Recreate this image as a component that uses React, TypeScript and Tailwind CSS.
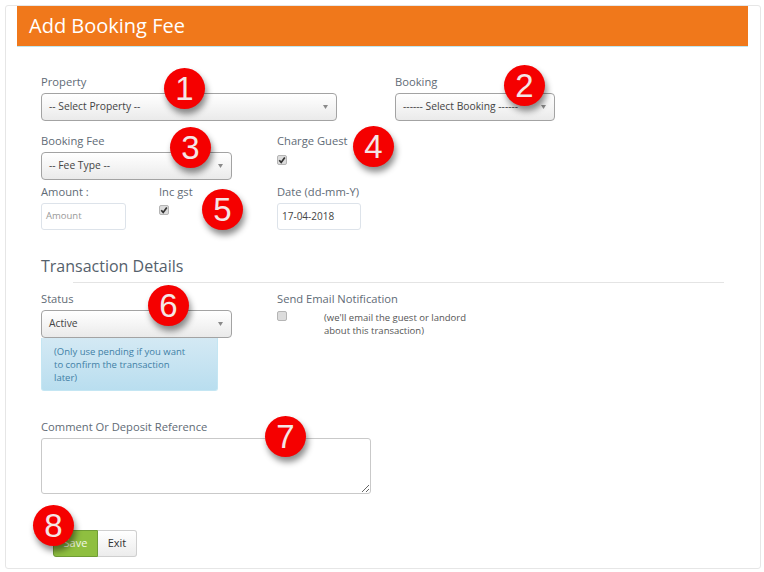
const font = { fontFamily: '"Open Sans", sans-serif' };

function Badge({ n, className }: { n: number; className: string }) {
  return (
    <div
      className={`absolute z-10 flex h-[41px] w-[41px] items-center justify-center rounded-full bg-[#f50000] text-[33px] leading-none text-[#f4e6e6] shadow-[2px_5px_6px_rgba(0,0,0,0.45)] ${className}`}
      style={{ fontFamily: '"Liberation Sans", sans-serif' }}
    >
      {n}
    </div>
  );
}

function Label({ children, className = "" }: { children: React.ReactNode; className?: string }) {
  return <div className={`text-[11.2px] leading-[16px] text-[#5f6b76] ${className}`}>{children}</div>;
}

function FakeSelect({ text, className }: { text: string; className: string }) {
  return (
    <div
      className={`flex h-[28px] items-center justify-between rounded-[4px] border border-[#a3a3a3] bg-gradient-to-b from-white via-[#f5f5f5] to-[#eaeaea] pl-[7px] pr-[8px] text-[10.3px] text-[#444] ${className}`}
    >
      <span>{text}</span>
      <svg width="5" height="4" viewBox="0 0 5 4" className="shrink-0">
        <path d="M0 0h5L2.5 4z" fill="#8a8a8a" />
      </svg>
    </div>
  );
}

function Check({ checked = false }: { checked?: boolean }) {
  return (
    <span className="flex h-[10px] w-[10px] items-center justify-center rounded-[2px] border border-[#b5b5b5] bg-[#dcdcdc]">
      {checked && (
        <svg width="8" height="8" viewBox="0 0 8 8">
          <path d="M1.2 4.2 3.2 6.4 6.8 1.4" fill="none" stroke="#333" strokeWidth="1.7" />
        </svg>
      )}
    </span>
  );
}

export default function App() {
  return (
    <div className="h-[572px] w-[764px] bg-white pl-[5px] pr-[3px] pt-[5px]" style={font}>
      <div className="relative h-[564px] rounded-[3px] border border-[#e6e6e6] bg-white pl-[11px] pr-[12px]">
        <div className="flex h-[41px] items-center border-b border-[#bfe6ef] bg-[#f0781b] pl-[12px] text-[20px] text-white">
          Add Booking Fee
        </div>

        <div className="pl-[24px]">
          {/* property + booking */}
          <div className="mt-[27px] flex">
            <div className="w-[354px]">
              <Label>Property</Label>
              <FakeSelect text="-- Select Property --" className="mt-[3px] w-[296px]" />
            </div>
            <div>
              <Label>Booking</Label>
              <FakeSelect text="------ Select Booking ------" className="mt-[3px] w-[160px]" />
            </div>
          </div>

          {/* fee type + charge guest */}
          <div className="mt-[12px] flex">
            <div className="w-[236px]">
              <Label>Booking Fee</Label>
              <FakeSelect text="-- Fee Type --" className="mt-[3px] w-[191px]" />
            </div>
            <div>
              <Label>Charge Guest</Label>
              <div className="mt-[6px]"><Check checked /></div>
            </div>
          </div>

          {/* amount, gst, date */}
          <div className="mt-[4px] flex">
            <div className="w-[118px]">
              <Label>Amount :</Label>
              <div className="mt-[3px] flex h-[27px] w-[85px] items-center rounded-[3px] border border-[#dde3ea] pl-[4px] text-[9.5px] text-[#999]">
                Amount
              </div>
            </div>
            <div className="w-[118px]">
              <Label>Inc gst</Label>
              <div className="mt-[5px]"><Check checked /></div>
            </div>
            <div>
              <Label>Date (dd-mm-Y)</Label>
              <div className="mt-[3px] flex h-[27px] w-[84px] items-center rounded-[3px] border border-[#dde3ea] pl-[4px] text-[10px] text-[#444]">
                17-04-2018
              </div>
            </div>
          </div>

          <div className="mt-[25px] text-[16px] leading-[22px] text-[#55616c]">Transaction Details</div>
          <div className="ml-[32px] mt-[5px] h-px w-[651px] bg-[#e4e4e4]" />

          {/* status + email */}
          <div className="mt-[8px] flex">
            <div className="w-[236px]">
              <Label>Status</Label>
              <FakeSelect text="Active" className="mt-[3px] w-[191px]" />
              <div className="h-[53px] w-[177px] rounded-b-[3px] border border-t-0 border-[#c4e6f3] bg-gradient-to-b from-[#d4e9f4] to-[#b9deef] pl-[12px] pt-[7px] text-[9.5px] leading-[13px] text-[#3f7fa6]">
                (Only use pending if you want
                <br />
                to confirm the transaction
                <br />
                later)
              </div>
            </div>
            <div>
              <Label>Send Email Notification</Label>
              <div className="mt-[4px] flex">
                <div className="w-[47px]"><Check /></div>
                <div className="text-[9.5px] leading-[13px] text-[#555]">
                  (we'll email the guest or landord
                  <br />
                  about this transaction)
                </div>
              </div>
            </div>
          </div>

          {/* comment */}
          <Label className="mt-[28px]">Comment Or Deposit Reference</Label>
          <textarea className="mt-[3px] block h-[56px] w-[330px] rounded-[3px] border border-[#c9c9c9] bg-white" />

          {/* buttons */}
          <div className="ml-[12px] mt-[36px] flex">
            <button className="h-[27px] w-[45px] rounded-l-[3px] border border-[#6f9c35] bg-[#8fbf40] text-[11px] text-[#f1f7e6]">
              Save
            </button>
            <button className="h-[27px] w-[39px] rounded-r-[3px] border border-l-0 border-[#cfcfcf] bg-gradient-to-b from-white to-[#ececec] text-[11px] text-[#333]">
              Exit
            </button>
          </div>
        </div>

        <Badge n={1} className="left-[158px] top-[62px]" />
        <Badge n={2} className="left-[498px] top-[59px]" />
        <Badge n={3} className="left-[164px] top-[121px]" />
        <Badge n={4} className="left-[347px] top-[120px]" />
        <Badge n={5} className="left-[196px] top-[183px]" />
        <Badge n={6} className="left-[142px] top-[279px]" />
        <Badge n={7} className="left-[259px] top-[410px]" />
        <Badge n={8} className="left-[27px] top-[499px]" />
      </div>
    </div>
  );
}
